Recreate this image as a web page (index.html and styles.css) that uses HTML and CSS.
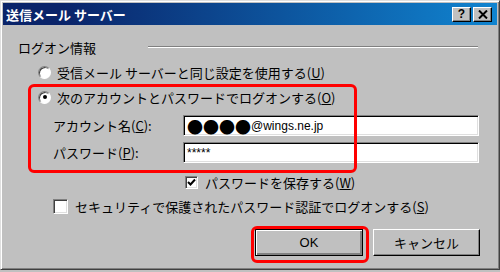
FILE: index.html
```html
<!DOCTYPE html>
<html lang="ja">
<head>
<meta charset="utf-8">
<link rel="stylesheet" href="styles.css">
</head>
<body>
<div class="window">
  <div class="titlebar">
    <span class="title">送信メール サーバー</span>
    <div class="tbtns">
      <span class="tbtn help">?</span>
      <span class="tbtn close"><svg width="10" height="9" viewBox="0 0 10 9"><path d="M1 0.5 L9 8.5 M9 0.5 L1 8.5" stroke="#000" stroke-width="2"/></svg></span>
    </div>
  </div>
  <div class="content">
    <div class="group-head">
      <span class="group-label">ログオン情報</span>
      <span class="group-line"></span>
    </div>
    <div class="row radio-row r1">
      <span class="radio"></span>
      <span class="txt">受信メール サーバーと同じ設定を使用する(<u>U</u>)</span>
    </div>
    <div class="row radio-row r2">
      <span class="radio on"><span class="dot"></span></span>
      <span class="txt">次のアカウントとパスワードでログオンする(<u>O</u>)</span>
    </div>
    <div class="row field f1">
      <span class="flabel">アカウント名(<u>C</u>):</span>
      <span class="input"><span class="blobs">●●●●</span><span class="mail">@wings.ne.jp</span></span>
    </div>
    <div class="row field f2">
      <span class="flabel">パスワード(<u>P</u>):</span>
      <span class="input"><span class="mail">*****</span></span>
    </div>
    <div class="row check-row c1">
      <span class="check"><svg width="9" height="9" viewBox="0 0 9 9"><path d="M1 4 L3.5 6.5 L8 1.5" stroke="#000" stroke-width="2" fill="none"/></svg></span>
      <span class="txt">パスワードを保存する(<u>W</u>)</span>
    </div>
    <div class="row check-row c2">
      <span class="check big"></span>
      <span class="txt">セキュリティで保護されたパスワード認証でログオンする(<u>S</u>)</span>
    </div>
    <div class="buttons">
      <span class="btn default">OK</span>
      <span class="btn">キャンセル</span>
    </div>
  </div>
  <div class="mark mark1"></div>
  <div class="mark mark2"></div>
</div>
</body>
</html>
```
FILE: styles.css
```css
html, body {
  margin: 0;
  padding: 0;
}
body {
  width: 500px;
  height: 272px;
  overflow: hidden;
  background: #c0c0c0;
  font-family: "Noto Sans CJK JP", "Liberation Sans", sans-serif;
  font-size: 13px;
  color: #000;
}
.window {
  position: relative;
  box-sizing: border-box;
  width: 500px;
  height: 270px;
  background: #c0c0c0;
  border-top: 1px solid #dfdfdf;
  border-left: 1px solid #dfdfdf;
  border-right: 1px solid #404040;
  border-bottom: 1px solid #404040;
  box-shadow: inset 1px 1px 0 #fff, inset -1px -1px 0 #808080;
  padding: 2px;
}
.titlebar {
  height: 22px;
  display: flex;
  align-items: center;
  justify-content: space-between;
  padding: 0 5px 0 3px;
  background: linear-gradient(to right, #0a246a 0%, #0a246a 12%, #1084d0 100%);
}
.title {
  color: #fff;
  font-weight: bold;
  font-size: 13px;
}
.tbtns {
  display: flex;
  gap: 2px;
}
.tbtn {
  box-sizing: border-box;
  width: 19px;
  height: 15px;
  background: #c0c0c0;
  border-top: 1px solid #fff;
  border-left: 1px solid #fff;
  border-right: 1px solid #000;
  border-bottom: 1px solid #000;
  box-shadow: inset -1px -1px 0 #808080;
  display: flex;
  align-items: center;
  justify-content: center;
  font-family: "Liberation Sans", sans-serif;
  font-weight: bold;
  font-size: 12px;
  line-height: 1;
}
.content {
  display: flex;
  flex-direction: column;
}
.group-head {
  margin-top: 14px;
  height: 16px;
  display: flex;
  align-items: center;
  padding-left: 15px;
  padding-right: 19px;
}
.group-label {
  width: 80px;
}
.group-line {
  flex: 1;
  margin-left: 50px;
  height: 0;
  border-top: 1px solid #808080;
  border-bottom: 1px solid #fff;
}
.row {
  display: flex;
  align-items: center;
}
.radio-row {
  height: 16px;
  padding-left: 35px;
  margin-top: 9px;
}
.radio {
  box-sizing: border-box;
  width: 13px;
  height: 13px;
  border-radius: 50%;
  background: #fff;
  border: 1px solid;
  border-color: #808080 #fff #fff #808080;
  box-shadow: inset 1px 1px 0 #404040;
  display: flex;
  align-items: center;
  justify-content: center;
  margin-right: 6px;
}
.dot {
  width: 4px;
  height: 4px;
  border-radius: 50%;
  background: #000;
}
.txt {
  white-space: nowrap;
}
.field {
  height: 21px;
  padding-left: 50px;
  padding-right: 18px;
}
.f1 {
  margin-top: 10px;
}
.f2 {
  margin-top: 6px;
}
.flabel {
  width: 130px;
  white-space: nowrap;
}
.input {
  flex: 1;
  box-sizing: border-box;
  height: 21px;
  background: #fff;
  border-top: 1px solid #808080;
  border-left: 1px solid #808080;
  border-right: 1px solid #fff;
  border-bottom: 1px solid #fff;
  box-shadow: inset 1px 1px 0 #000, inset -1px -1px 0 #dfdfdf;
  padding-left: 3px;
  display: flex;
  align-items: center;
}
.blobs {
  font-size: 16px;
  line-height: 1;
}
.mail {
  font-family: "Liberation Sans", sans-serif;
  font-size: 12px;
}
.check-row {
  height: 16px;
}
.c1 {
  margin-top: 11px;
  padding-left: 182px;
}
.c2 {
  margin-top: 8px;
  padding-left: 50px;
}
.check {
  box-sizing: border-box;
  width: 13px;
  height: 13px;
  background: #fff;
  border-top: 1px solid #808080;
  border-left: 1px solid #808080;
  border-right: 1px solid #fff;
  border-bottom: 1px solid #fff;
  box-shadow: inset 1px 1px 0 #404040, inset -1px -1px 0 #dfdfdf;
  display: flex;
  align-items: center;
  justify-content: center;
  margin-right: 7px;
}
.check.big {
  width: 15px;
  height: 15px;
}
.buttons {
  margin-top: 15px;
  display: flex;
  justify-content: flex-end;
  gap: 10px;
  padding-right: 17px;
}
.btn {
  box-sizing: border-box;
  width: 107px;
  height: 27px;
  background: #c0c0c0;
  border-top: 1px solid #fff;
  border-left: 1px solid #fff;
  border-right: 1px solid #000;
  border-bottom: 1px solid #000;
  box-shadow: inset -1px -1px 0 #808080;
  display: flex;
  align-items: center;
  justify-content: center;
}
.btn.default {
  width: 108px;
  border: 1px solid #000;
  box-shadow: inset 1px 1px 0 #fff, inset -2px -2px 0 #808080;
  font-family: "Liberation Sans", sans-serif;
  font-size: 13px;
}
.mark {
  position: absolute;
  box-sizing: border-box;
  border: 3px solid #f00;
  border-radius: 6px;
}
.mark1 {
  left: 27px;
  top: 83px;
  width: 329px;
  height: 89px;
}
.mark2 {
  left: 250px;
  top: 225px;
  width: 118px;
  height: 37px;
}
```
